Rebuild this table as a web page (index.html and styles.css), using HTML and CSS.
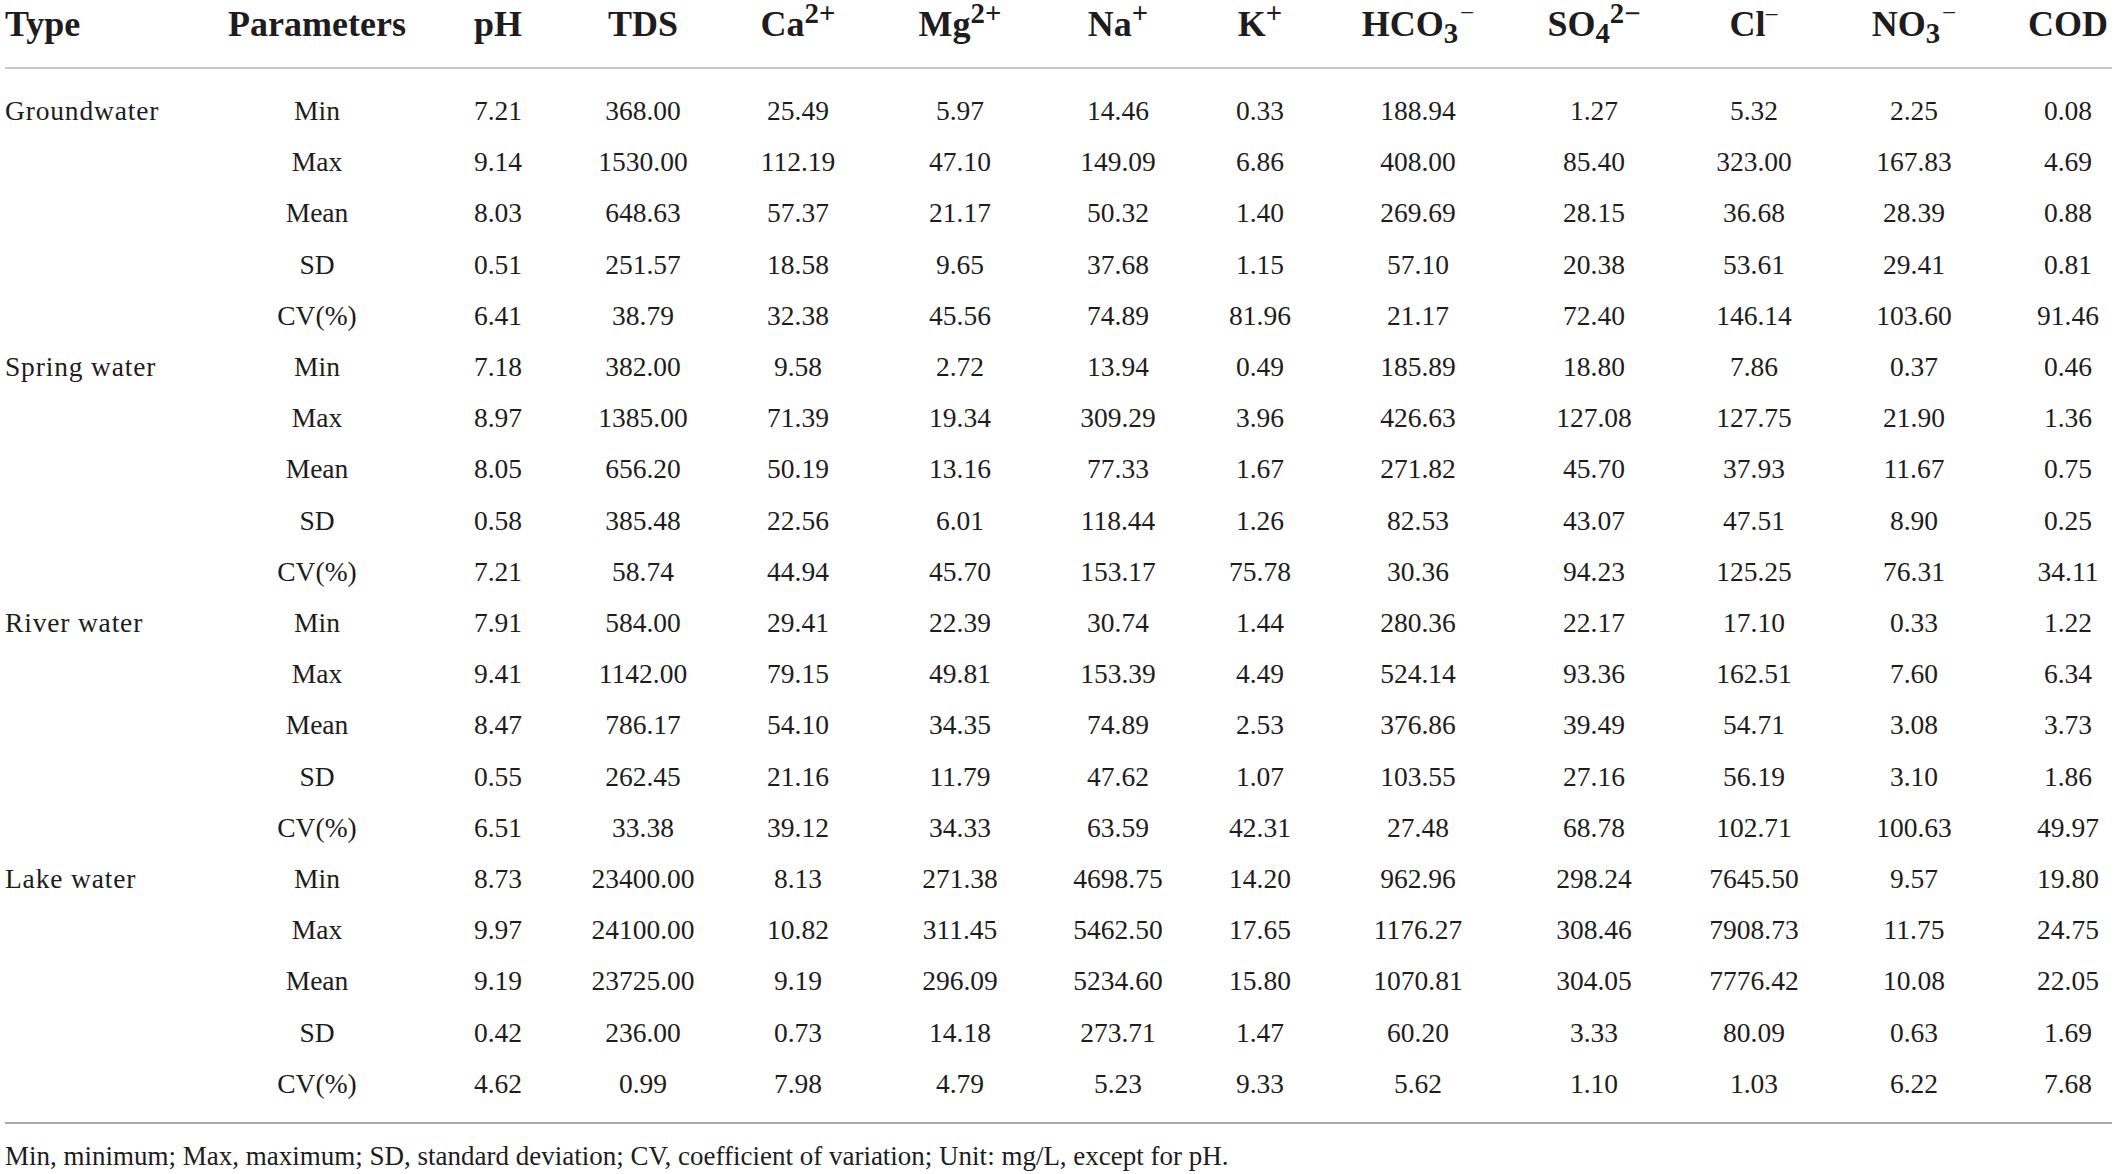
FILE: index.html
```html
<!DOCTYPE html>
<html lang="en">
<head>
  <meta charset="UTF-8">
  <meta name="viewport" content="width=device-width, initial-scale=1.0">
  <title>Water chemistry statistics</title>
  <link rel="stylesheet" href="styles.css">
</head>
<body>

  <div class="container">
    <table class="stats">
      <colgroup>
        <col class="c-type">
        <col class="c-param">
        <col class="c-ph">
        <col class="c-tds">
        <col class="c-ca">
        <col class="c-mg">
        <col class="c-na">
        <col class="c-k">
        <col class="c-hco3">
        <col class="c-so4">
        <col class="c-cl">
        <col class="c-no3">
        <col class="c-cod">
      </colgroup>
      <thead>
        <tr>
          <th class="type">Type</th>
          <th>Parameters</th>
          <th>pH</th>
          <th>TDS</th>
          <th>Ca<sup>2+</sup></th>
          <th>Mg<sup>2+</sup></th>
          <th>Na<sup>+</sup></th>
          <th>K<sup>+</sup></th>
          <th>HCO<sub>3</sub><sup class="ion">−</sup></th>
          <th>SO<sub>4</sub><sup>2−</sup></th>
          <th>Cl<sup class="tight">−</sup></th>
          <th>NO<sub>3</sub><sup class="ion">−</sup></th>
          <th>COD</th>
        </tr>
      </thead>
      <tbody>
        <!-- Groundwater -->
        <tr class="first">
          <td class="type">Groundwater</td>
          <td>Min</td><td>7.21</td><td>368.00</td><td>25.49</td><td>5.97</td><td>14.46</td><td>0.33</td><td>188.94</td><td>1.27</td><td>5.32</td><td>2.25</td><td>0.08</td>
        </tr>
        <tr>
          <td class="type"></td>
          <td>Max</td><td>9.14</td><td>1530.00</td><td>112.19</td><td>47.10</td><td>149.09</td><td>6.86</td><td>408.00</td><td>85.40</td><td>323.00</td><td>167.83</td><td>4.69</td>
        </tr>
        <tr>
          <td class="type"></td>
          <td>Mean</td><td>8.03</td><td>648.63</td><td>57.37</td><td>21.17</td><td>50.32</td><td>1.40</td><td>269.69</td><td>28.15</td><td>36.68</td><td>28.39</td><td>0.88</td>
        </tr>
        <tr>
          <td class="type"></td>
          <td>SD</td><td>0.51</td><td>251.57</td><td>18.58</td><td>9.65</td><td>37.68</td><td>1.15</td><td>57.10</td><td>20.38</td><td>53.61</td><td>29.41</td><td>0.81</td>
        </tr>
        <tr>
          <td class="type"></td>
          <td>CV(%)</td><td>6.41</td><td>38.79</td><td>32.38</td><td>45.56</td><td>74.89</td><td>81.96</td><td>21.17</td><td>72.40</td><td>146.14</td><td>103.60</td><td>91.46</td>
        </tr>

        <!-- Spring water -->
        <tr>
          <td class="type">Spring water</td>
          <td>Min</td><td>7.18</td><td>382.00</td><td>9.58</td><td>2.72</td><td>13.94</td><td>0.49</td><td>185.89</td><td>18.80</td><td>7.86</td><td>0.37</td><td>0.46</td>
        </tr>
        <tr>
          <td class="type"></td>
          <td>Max</td><td>8.97</td><td>1385.00</td><td>71.39</td><td>19.34</td><td>309.29</td><td>3.96</td><td>426.63</td><td>127.08</td><td>127.75</td><td>21.90</td><td>1.36</td>
        </tr>
        <tr>
          <td class="type"></td>
          <td>Mean</td><td>8.05</td><td>656.20</td><td>50.19</td><td>13.16</td><td>77.33</td><td>1.67</td><td>271.82</td><td>45.70</td><td>37.93</td><td>11.67</td><td>0.75</td>
        </tr>
        <tr>
          <td class="type"></td>
          <td>SD</td><td>0.58</td><td>385.48</td><td>22.56</td><td>6.01</td><td>118.44</td><td>1.26</td><td>82.53</td><td>43.07</td><td>47.51</td><td>8.90</td><td>0.25</td>
        </tr>
        <tr>
          <td class="type"></td>
          <td>CV(%)</td><td>7.21</td><td>58.74</td><td>44.94</td><td>45.70</td><td>153.17</td><td>75.78</td><td>30.36</td><td>94.23</td><td>125.25</td><td>76.31</td><td>34.11</td>
        </tr>

        <!-- River water -->
        <tr>
          <td class="type">River water</td>
          <td>Min</td><td>7.91</td><td>584.00</td><td>29.41</td><td>22.39</td><td>30.74</td><td>1.44</td><td>280.36</td><td>22.17</td><td>17.10</td><td>0.33</td><td>1.22</td>
        </tr>
        <tr>
          <td class="type"></td>
          <td>Max</td><td>9.41</td><td>1142.00</td><td>79.15</td><td>49.81</td><td>153.39</td><td>4.49</td><td>524.14</td><td>93.36</td><td>162.51</td><td>7.60</td><td>6.34</td>
        </tr>
        <tr>
          <td class="type"></td>
          <td>Mean</td><td>8.47</td><td>786.17</td><td>54.10</td><td>34.35</td><td>74.89</td><td>2.53</td><td>376.86</td><td>39.49</td><td>54.71</td><td>3.08</td><td>3.73</td>
        </tr>
        <tr>
          <td class="type"></td>
          <td>SD</td><td>0.55</td><td>262.45</td><td>21.16</td><td>11.79</td><td>47.62</td><td>1.07</td><td>103.55</td><td>27.16</td><td>56.19</td><td>3.10</td><td>1.86</td>
        </tr>
        <tr>
          <td class="type"></td>
          <td>CV(%)</td><td>6.51</td><td>33.38</td><td>39.12</td><td>34.33</td><td>63.59</td><td>42.31</td><td>27.48</td><td>68.78</td><td>102.71</td><td>100.63</td><td>49.97</td>
        </tr>

        <!-- Lake water -->
        <tr>
          <td class="type">Lake water</td>
          <td>Min</td><td>8.73</td><td>23400.00</td><td>8.13</td><td>271.38</td><td>4698.75</td><td>14.20</td><td>962.96</td><td>298.24</td><td>7645.50</td><td>9.57</td><td>19.80</td>
        </tr>
        <tr>
          <td class="type"></td>
          <td>Max</td><td>9.97</td><td>24100.00</td><td>10.82</td><td>311.45</td><td>5462.50</td><td>17.65</td><td>1176.27</td><td>308.46</td><td>7908.73</td><td>11.75</td><td>24.75</td>
        </tr>
        <tr>
          <td class="type"></td>
          <td>Mean</td><td>9.19</td><td>23725.00</td><td>9.19</td><td>296.09</td><td>5234.60</td><td>15.80</td><td>1070.81</td><td>304.05</td><td>7776.42</td><td>10.08</td><td>22.05</td>
        </tr>
        <tr>
          <td class="type"></td>
          <td>SD</td><td>0.42</td><td>236.00</td><td>0.73</td><td>14.18</td><td>273.71</td><td>1.47</td><td>60.20</td><td>3.33</td><td>80.09</td><td>0.63</td><td>1.69</td>
        </tr>
        <tr class="last">
          <td class="type"></td>
          <td>CV(%)</td><td>4.62</td><td>0.99</td><td>7.98</td><td>4.79</td><td>5.23</td><td>9.33</td><td>5.62</td><td>1.10</td><td>1.03</td><td>6.22</td><td>7.68</td>
        </tr>
      </tbody>
    </table>

    <p class="note">Min, minimum; Max, maximum; SD, standard deviation; CV, coefficient of variation; Unit: mg/L, except for pH.</p>
  </div>

</body>
</html>
```

FILE: styles.css
```css
* {
  box-sizing: border-box;
}
body {
  margin: 0;
  padding: 0;
  background: white;
  color: #1e1c1d;
  font-family: 'Liberation Serif', 'Times New Roman', serif;
}
.container {
  padding: 0 5px;
}

/* Table */
.stats {
  width: 2107px;
  table-layout: fixed;
  border-collapse: collapse;
}
.c-type { width: 175px; }
.c-param { width: 274px; }
.c-ph { width: 88px; }
.c-tds { width: 202px; }
.c-ca { width: 108px; }
.c-mg { width: 216px; }
.c-na { width: 100px; }
.c-k { width: 184px; }
.c-hco3 { width: 132px; }
.c-so4 { width: 220px; }
.c-cl { width: 100px; }
.c-no3 { width: 220px; }
.c-cod { width: 88px; }

.stats th {
  font-size: 36px;
  font-weight: bold;
  line-height: 41px;
  padding: 4px 0 22px;
  text-align: center;
  white-space: nowrap;
  border-bottom: 2px solid #c9c9c9;
}
.stats td {
  font-size: 27.5px;
  line-height: 51.2px;
  padding: 0;
  text-align: center;
  white-space: nowrap;
}
.stats .type {
  text-align: left;
}
.stats td.type {
  letter-spacing: 0.03em;
}
.stats tr.first td {
  padding-top: 16px;
}
.stats tr.last td {
  padding-bottom: 13px;
  border-bottom: 2px solid #a9a9a9;
}

.stats sup,
.stats sub {
  font-size: 0.8em;
  line-height: 0;
}
.stats sup {
  vertical-align: 0.45em;
}
.stats sub {
  vertical-align: -0.25em;
}
.stats sup.ion {
  font-size: 0.7em;
  font-weight: normal;
  vertical-align: 0.6em;
  margin-left: 2px;
}
.stats sup.tight {
  margin-left: -1px;
  font-size: 0.7em;
  font-weight: normal;
  vertical-align: 0.5em;
}

.note {
  margin: 16px 0 0;
  font-size: 27px;
  line-height: 32px;
}
```
